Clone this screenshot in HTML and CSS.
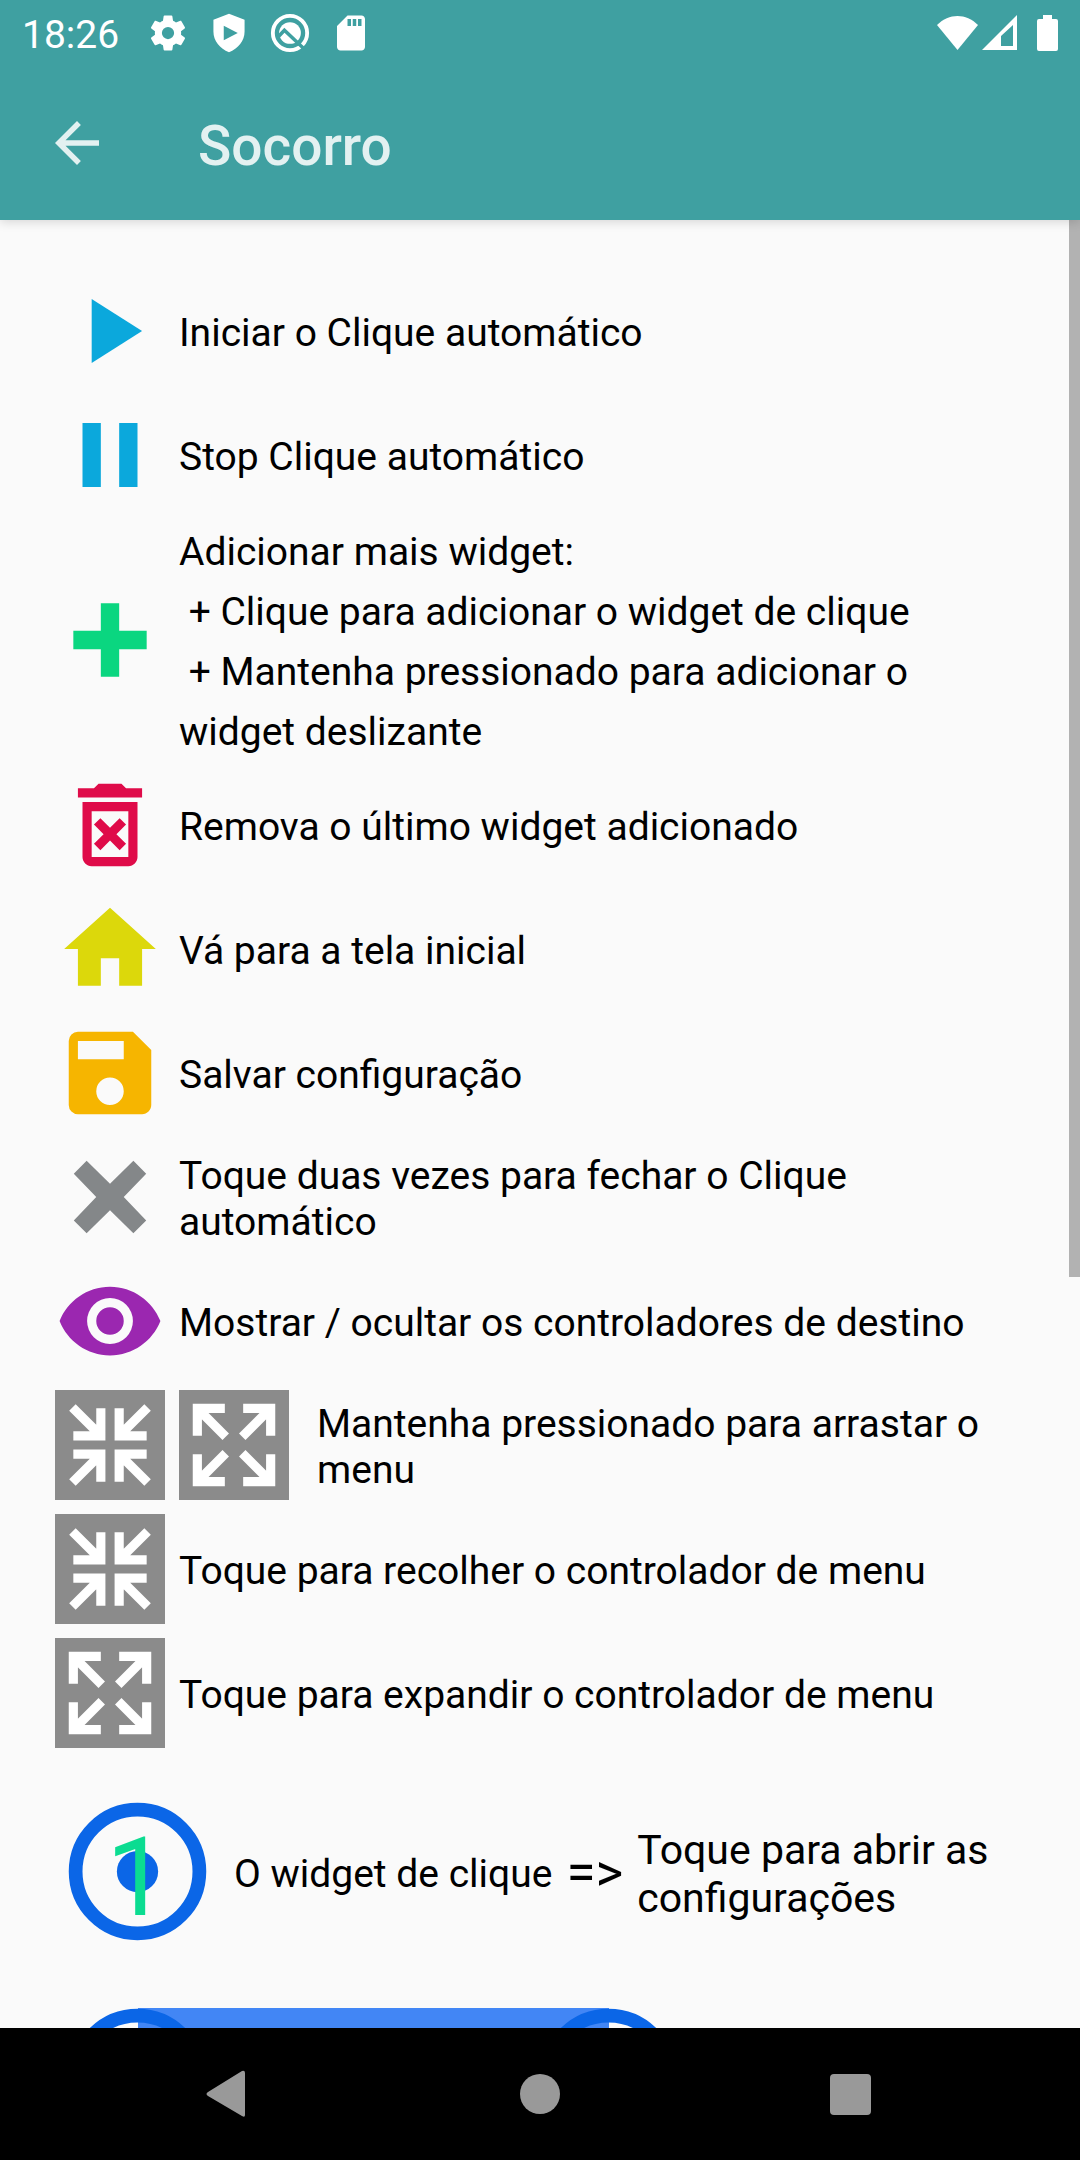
FILE: index.html
```html
<!DOCTYPE html>
<html lang="pt">
  <head>
    <meta charset="utf-8">
    <meta name="viewport" content="width=device-width, initial-scale=1">
    <title>Socorro</title>
    <link rel="stylesheet" href="styles.css">
  </head>
  <body>
    <!-- shared icons -->
    <svg class="defs" width="0" height="0">
      <symbol id="collapse" viewBox="0 0 24 24">
        <path d="M10 4v6H4M3.800 3.800L10 10M14 4v6h6M20.200 3.800L14 10M4 14h6v6M3.800 20.200L10 14M20 14h-6v6M20.200 20.200L14 14"/>
      </symbol>
      <symbol id="expand" viewBox="0 0 24 24">
        <path d="M10 4H4v6M4 4l6.200 6.200M14 4h6v6M20 4l-6.200 6.200M4 14v6h6M4 20l6.200-6.200M20 14v6h-6M20 20l-6.200-6.200"/>
      </symbol>
      <symbol id="target" viewBox="0 0 24 24">
        <circle cx="12" cy="12" r="9" fill="none" stroke="#0b66e7" stroke-width="2"/>
        <circle cx="12" cy="12" r="3" fill="#0b66e7"/>
      </symbol>
    </svg>

    <header>
      <div class="status">
        <span class="clock">18:26</span>
        <svg viewBox="0 0 24 24"><path d="M19.430 12.980c.04-.32.07-.64.07-.98s-.03-.66-.07-.98l2.110-1.650c.19-.15.24-.42.12-.64l-2-3.460c-.12-.22-.39-.3-.61-.22l-2.490 1c-.52-.4-1.080-.73-1.690-.98l-.38-2.650C14.460 2.180 14.250 2 14 2h-4c-.25 0-.46.18-.49.420l-.38 2.650c-.61.25-1.170.59-1.690.98l-2.490-1c-.23-.09-.49 0-.61.220l-2 3.460c-.13.22-.07.49.12.640l2.110 1.650c-.04.32-.07.65-.07.98s.03.66.07.98l-2.110 1.650c-.19.15-.24.42-.12.640l2 3.460c.12.22.39.3.61.220l2.490-1c.52.4 1.080.73 1.690.98l.38 2.650c.03.24.24.42.49.420h4c.25 0 .46-.18.49-.42l.38-2.650c.61-.25 1.170-.59 1.690-.98l2.490 1c.23.09.49 0 .61-.22l2-3.460c.12-.22.07-.49-.12-.64zM12 15.500a3.500 3.500 0 1 1 0-7 3.500 3.500 0 0 1 0 7z"/></svg>
        <svg viewBox="0 0 24 24"><path fill-rule="evenodd" d="M12 1L3.100 4.400v6.800c0 5.400 3.700 9.800 8.900 11.800 5.200-2 8.900-6.400 8.900-11.800V4.400zM9 7.800l8 4.200-8 4.200z"/></svg>
        <svg viewBox="0 0 24 24">
          <circle cx="12" cy="12" r="9.800" fill="none" stroke="#fff" stroke-width="2.200"/>
          <circle cx="12" cy="12" r="6.200"/>
          <path fill="none" stroke="#3fa0a1" stroke-width="2" d="M4.500 15l4.300-4.600L20 21"/>
        </svg>
        <svg viewBox="0 0 24 24"><path fill-rule="evenodd" d="M18 2h-8L4 8v12c0 1.100.9 2 2 2h12c1.100 0 2-.9 2-2V4c0-1.100-.9-2-2-2zM12 8h-2V4h2zM15 8h-2V4h2zM18 8h-2V4h2z"/></svg>
        <span class="space"></span>
        <svg class="wifi" viewBox="0 0 41 36"><path d="M0 10C12-2 29-2 41 10L20.500 35z"/></svg>
        <svg class="signal" viewBox="0 0 35 36"><path fill-rule="evenodd" d="M35 0v35H0zM31 10L19 21v10h12z"/></svg>
        <svg class="battery" viewBox="0 0 21 36"><path d="M6 0h9v4h4q2 0 2 2v28q0 2-2 2H2q-2 0-2-2V6q0-2 2-2h4z"/></svg>
      </div>
      <div class="toolbar">
        <button class="back" aria-label="Voltar">
          <svg viewBox="0 0 24 24"><path d="M20 11H7.830l5.590-5.590L12 4l-8 8 8 8 1.410-1.410L7.830 13H20z"/></svg>
        </button>
        <h1>Socorro</h1>
      </div>
    </header>

    <main>
      <div class="row">
        <svg class="icon blue" viewBox="0 0 24 24"><path d="M8 5v14l11-7z"/></svg>
        <p>Iniciar o Clique automático</p>
      </div>
      <div class="row">
        <svg class="icon blue" viewBox="0 0 24 24"><path d="M6 5h4v14H6zM14 5h4v14h-4z"/></svg>
        <p>Stop Clique automático</p>
      </div>
      <div class="row">
        <svg class="icon green" viewBox="0 0 24 24"><path d="M10 4h4v6h6v4h-6v6h-4v-6H4v-4h6z"/></svg>
        <p class="long">Adicionar mais widget:
 + Clique para adicionar o widget de clique
 + Mantenha pressionado para adicionar o widget deslizante</p>
      </div>
      <div class="row">
        <svg class="icon red" viewBox="0 0 24 24"><path fill-rule="evenodd" d="M9.500 3h5l1 1H19v2H5V4h3.500zM6 7h12v12c0 1.100-.9 2-2 2H8c-1.100 0-2-.9-2-2zM8 9v10h8V9zM8.500 11.900l1.400-1.400 2.100 2.100 2.100-2.100 1.400 1.400-2.100 2.100 2.100 2.100-1.400 1.400-2.100-2.100-2.100 2.100-1.400-1.400 2.100-2.100z"/></svg>
        <p>Remova o último widget adicionado</p>
      </div>
      <div class="row">
        <svg class="icon yellow" viewBox="0 0 24 24"><path d="M10 20v-6h4v6h5v-8h3L12 3 2 12h3v8z"/></svg>
        <p>Vá para a tela inicial</p>
      </div>
      <div class="row">
        <svg class="icon orange" viewBox="0 0 24 24"><path fill-rule="evenodd" d="M17 3H5a2 2 0 0 0-2 2v14a2 2 0 0 0 2 2h14c1.100 0 2-.9 2-2V7zM12 19a3 3 0 1 1 0-6 3 3 0 0 1 0 6zM15 9H5V5h10z"/></svg>
        <p>Salvar configuração</p>
      </div>
      <div class="row">
        <svg class="icon gray" viewBox="0 0 24 24"><path d="M6.900 4.100L12 9.100l5.100-5 2.800 2.800-4.900 5.100 4.900 5.100-2.800 2.800-5.100-5-5.100 5-2.800-2.800L9 12 4.100 6.900z"/></svg>
        <p>Toque duas vezes para fechar o Clique automático</p>
      </div>
      <div class="row">
        <svg class="icon purple" viewBox="0 0 24 24"><path d="M12 4.500C7 4.500 2.730 7.610 1 12c1.730 4.390 6 7.500 11 7.500s9.270-3.110 11-7.500c-1.730-4.390-6-7.500-11-7.500zM12 17a5 5 0 1 1 0-10 5 5 0 0 1 0 10zm0-8a3 3 0 1 0 0 6 3 3 0 0 0 0-6z"/></svg>
        <p>Mostrar / ocultar os controladores de destino</p>
      </div>
      <div class="row">
        <svg class="icon box"><use href="#collapse"/></svg>
        <svg class="icon box"><use href="#expand"/></svg>
        <p class="indent">Mantenha pressionado para arrastar o menu</p>
      </div>
      <div class="row">
        <svg class="icon box"><use href="#collapse"/></svg>
        <p>Toque para recolher o controlador de menu</p>
      </div>
      <div class="row">
        <svg class="icon box"><use href="#expand"/></svg>
        <p>Toque para expandir o controlador de menu</p>
      </div>
      <div class="row widget">
        <svg class="target" viewBox="0 0 165 165">
          <use href="#target"/>
          <text x="82" y="126" text-anchor="middle">1</text>
        </svg>
        <p>O widget de clique</p>
        <span class="arrow">=&gt;</span>
        <p class="action">Toque para abrir as configurações</p>
      </div>
      <div class="swipe">
        <svg class="target"><use href="#target"/></svg>
        <svg class="target"><use href="#target"/></svg>
      </div>
      <div class="scrollbar"></div>
    </main>

    <nav>
      <button aria-label="Voltar"><svg viewBox="0 0 48 48"><path d="M36 1q3-1 3 2v42q0 3-3 1L2 26q-3-2 0-4z"/></svg></button>
      <button aria-label="Início"><svg viewBox="0 0 48 48"><circle cx="24" cy="24" r="20"/></svg></button>
      <button aria-label="Recentes"><svg viewBox="0 0 48 48"><rect x="4" y="4" width="41" height="41" rx="4"/></svg></button>
    </nav>
  </body>
</html>
```
FILE: styles.css
```css
* {box-sizing: border-box;}
body {margin: 0; height: 100vh; display: flex; flex-direction: column; background-color: #fafafa; color: #000; font-family: Roboto, sans-serif; font-size: 39px; line-height: 46px;}
p, h1 {margin: 0;}
button {border: 0; padding: 0; background: none;}
svg {display: block; flex: none;}
.defs {position: absolute;}

header {position: relative; z-index: 1; flex: none; background-color: #3fa0a1; box-shadow: 0 2px 10px rgba(0, 0, 0, 0.15);}
.status {display: flex; align-items: center; height: 66px; padding: 0 22px; color: #fff;}
.status svg {width: 42px; height: 42px; margin-right: 19px; fill: #fff;}
.clock {margin-right: 28px; padding-top: 4px;}
.space {flex: 1;}
.status .wifi {width: 41px; height: 36px; margin-right: 4px;}
.status .signal {width: 35px; height: 36px; margin-right: 20px;}
.status .battery {width: 21px; height: 36px; margin-right: 0;}
.toolbar {display: flex; align-items: center; height: 154px; padding: 0 44px;}
.back {width: 66px; height: 66px; margin-right: 88px;}
.back svg {fill: #e3f1f1;}
h1 {padding-top: 6px; font-size: 55px; font-weight: 500; line-height: 64px; color: #e3f1f1;}

main {position: relative; flex: 1; min-height: 0; overflow: hidden; display: flex; flex-direction: column; gap: 14px; padding: 56px 55px 0;}
.row {flex: none; display: flex; align-items: center; gap: 14px;}
.row p {padding-top: 4px;}
.icon {width: 110px; height: 110px;}
.long {line-height: 60px; margin: -6px 0; white-space: pre-wrap;}
.row .indent {margin-left: 14px;}
.blue {fill: #0ba8dc;}
.green {fill: #0ad680;}
.red {fill: #df0b49;}
.yellow {fill: #dcd80b;}
.orange {fill: #f6b500;}
.gray {fill: #848789;}
.purple {fill: #9b27b0;}
.box {background-color: #8b8b8b; fill: none; stroke: #fff; stroke-width: 2px;}

.widget {margin-top: 27px;}
.target {width: 165px; height: 165px;}
.target text {font-size: 110px; fill: #0bdc91;}
.arrow {padding-top: 2px; font-size: 53px;}
.widget .action {flex: 1; font-size: 41px; line-height: 48px;}
.swipe {flex: none; display: flex; justify-content: space-between; width: 636px; margin-top: 27px; background: linear-gradient(#4286f5, #4286f5) 83px 13px / 471px 138px no-repeat;}
.scrollbar {position: absolute; top: 0; right: 0; width: 11px; height: 1057px; background-color: #b2b2b2;}

nav {flex: none; display: flex; height: 132px; padding: 0 75px; background-color: #000;}
nav button {flex: 1; display: flex; align-items: center; justify-content: center;}
nav svg {width: 48px; height: 48px; fill: #999;}
```
